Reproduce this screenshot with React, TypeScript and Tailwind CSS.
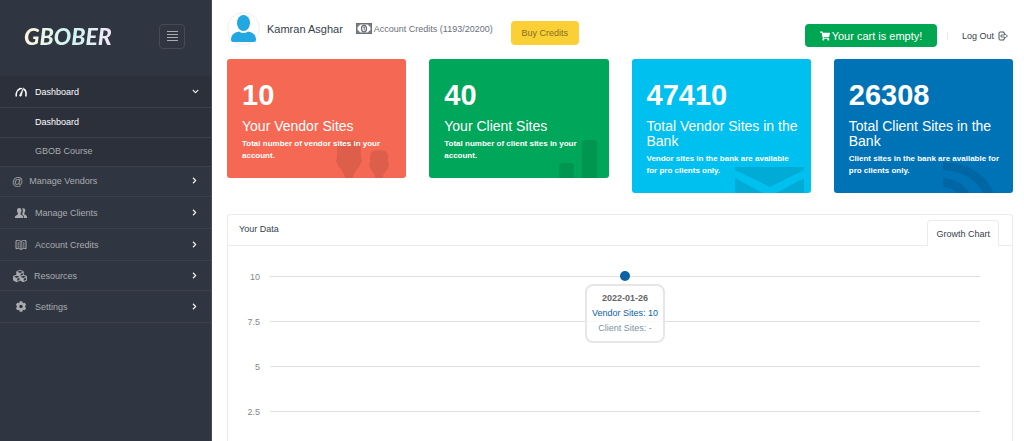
import type { ReactNode } from 'react';
import clsx from 'clsx';
import { FaChevronDown, FaChevronRight, FaCog, FaCubes, FaShoppingCart } from 'react-icons/fa';

type MenuItem = {
    label: string;
    icon: ReactNode;
    className: string;
};

function GaugeIcon() {
    return (
        <svg className="w-3 h-3" viewBox="0 0 24 24" fill="none" stroke="currentColor" aria-hidden="true">
            <path d="M2.5 21c-1-8 3-14 8-15.5" strokeWidth="3" />
            <path d="M17 6c4.500 2 6 8 4.500 15" strokeWidth="3" />
            <path d="M9 5h5" strokeWidth="2.5" />
            <path d="M17 3.500 12.500 20a2 2 0 0 1-3.500-1z" fill="currentColor" strokeWidth="1" />
        </svg>
    );
}

function UsersIcon() {
    return (
        <svg className="w-3 h-3" viewBox="0 0 24 24" fill="currentColor" aria-hidden="true">
            <path d="M8.500 2c3.200 0 4.500 2 4.500 5 0 2.200-.8 4-1.800 5v3c0 1 5.300 1.800 5.300 4.500V22H0v-2.500C0 16.800 5.800 16 5.800 15v-3C4.800 11 4 9.200 4 7c0-3 1.300-5 4.500-5z" />
            <path d="M14.500 3c3.500-1 6 .8 6 4.200 0 2-.8 3.600-1.700 4.500v3c0 1 5.200 2 5.200 4.600V22h-6v-2.500c0-2-1.500-3.300-3.500-4.200v-3c1.600-2.300 1.800-6.300 0-9.300z" />
        </svg>
    );
}

function BookIcon() {
    return (
        <svg className="w-3 h-3" viewBox="0 0 24 24" fill="none" stroke="currentColor" strokeWidth="2" aria-hidden="true">
            <path d="M12 5C9 2.500 5 2.500 2 3.500v16c3-1 7-1 10 1.500 3-2.500 7-2.500 10-1.500v-16C19 2.500 15 2.500 12 5zM12 5v16" />
            <path d="M5 8h4M5 12h4M5 16h4M15 8h4M15 12h4M15 16h4" />
        </svg>
    );
}

function MoneyIcon() {
    return (
        <svg className="w-4 h-[11px]" viewBox="0 0 32 22" fill="none" stroke="currentColor" aria-hidden="true">
            <path d="M1.500 1.500h29v19h-29z" strokeWidth="3" />
            <path d="M3 3h5L3 8zM29 3h-5l5 5zM3 19h5l-5-5zM29 19h-5l5-5z" fill="currentColor" />
            <ellipse cx="16" cy="11" rx="5" ry="6.5" strokeWidth="2.5" />
            <path d="M14.500 9 16.500 7.500v7" strokeWidth="2" />
        </svg>
    );
}

function LogoutIcon() {
    return (
        <svg className="w-[10px] h-[10px]" viewBox="0 0 20 20" fill="none" stroke="currentColor" strokeWidth="1.8" aria-hidden="true">
            <path d="M12 5V2H4Q2 2 2 4v12q0 2 2 2h8v-3" />
            <path d="M6 8h7V5l6 5-6 5v-3H6z" strokeWidth="1.5" />
        </svg>
    );
}

const MENU: MenuItem[] = [
    { label: 'Manage Vendors', icon: <span className="text-[11px] leading-3">@</span>, className: 'h-[30px] pb-[2px] pl-3 gap-[6px]' },
    { label: 'Manage Clients', icon: <UsersIcon />, className: 'h-8 pl-[15px] gap-2' },
    { label: 'Account Credits', icon: <BookIcon />, className: 'h-8 pl-[15px] gap-2' },
    { label: 'Resources', icon: <FaCubes className="w-[14px] h-[14px]" />, className: 'h-[30px] pl-[13px] gap-[7px]' },
    { label: 'Settings', icon: <FaCog className="w-3 h-[11px]" />, className: 'h-8 pl-[15px] gap-2' },
];

const CARDS = [
    {
        value: '10',
        title: 'Your Vendor Sites',
        text: 'Total number of vendor sites in your account.',
        color: 'bg-[#f56954]',
        art: (
            <>
                <path d="M8 5q0-5 12-5t12 5v12l1 4-3 6q-5 5-6 11H16q-1-6-6-11l-3-6 1-4z" />
                <path d="M41 16q0-6 9-6t9 6v6l1 3-2 5q-4 3-4 8h-8q0-5-4-8l-2-5 1-3z" />
            </>
        ),
    },
    {
        value: '40',
        title: 'Your Client Sites',
        text: 'Total number of client sites in your account.',
        color: 'bg-[#00a65a]',
        art: (
            <>
                <path d="M27 38V26q0-3 3-3h9q3 0 3 3v12z" />
                <path d="M50 38V3q0-3 3-3h9q3 0 3 3v35z" />
            </>
        ),
    },
    {
        value: '47410',
        title: 'Total Vendor Sites in the Bank',
        text: 'Vendor sites in the bank are available for pro clients only.',
        color: 'bg-[#00c0ef]',
        art: (
            <>
                <path d="M1 12h69v3L36 32 1 15z" />
                <path d="M1 23v15h28zM70 23v15H42z" />
            </>
        ),
    },
    {
        value: '26308',
        title: 'Total Client Sites in the Bank',
        text: 'Client sites in the bank are available for pro clients only.',
        color: 'bg-[#0073b7]',
        art: (
            <>
                <path d="M7 7q37 1 51 31H47Q36 17 7 15z" />
                <path d="M7 23q18 1 27 15H21q-6-5-14-6z" />
            </>
        ),
    },
];

const TICKS = ['10', '7.5', '5', '2.5'];

function Sidebar() {
    return (
        <aside className="w-[212px] shrink-0 bg-[#303641] text-[#aaabae] border-r border-[#454a54]">
            <div className="h-[76px] flex items-center justify-between pb-1 pl-6 pr-[26px]">
                <a
                    href="#"
                    className="pr-1 font-['Lato',sans-serif] text-[23px] leading-6 font-black italic text-transparent bg-clip-text bg-gradient-to-r from-[#fff6dc] via-[#cdf5f2] to-[#f4e4f5]"
                >
                    GBOBER
                </a>
                <button type="button" aria-label="Toggle menu" className="w-[26px] h-[25px] flex flex-col items-center justify-center gap-[2px] rounded-sm border border-[#454a54]">
                    <span className="w-[11px] h-px bg-[#aaabae]" />
                    <span className="w-[11px] h-px bg-[#aaabae]" />
                    <span className="w-[11px] h-px bg-[#aaabae]" />
                    <span className="w-[11px] h-px bg-[#aaabae]" />
                </button>
            </div>

            <nav>
                <div className="bg-[#2b303a]">
                    <a href="#" className="h-8 flex items-center gap-2 pl-[15px] pr-3 border-b border-[#3b404b] text-white">
                        <GaugeIcon />
                        <span className="flex-1">Dashboard</span>
                        <FaChevronDown className="w-[7px] h-[7px]" />
                    </a>
                    <a href="#" className="h-[30px] flex items-center pb-[2px] pl-[35px] border-b border-[#3b404b] text-white">Dashboard</a>
                    <a href="#" className="h-[29px] flex items-center pb-[2px] pl-[35px] border-b border-[#3b404b]">GBOB Course</a>
                </div>
                {MENU.map((item) => (
                    <a key={item.label} href="#" className={clsx('flex items-center pr-[13px] border-b border-[#3b404b]', item.className)}>
                        {item.icon}
                        <span className="flex-1">{item.label}</span>
                        <FaChevronRight className="w-[7px] h-[7px] text-white" />
                    </a>
                ))}
            </nav>
        </aside>
    );
}

function Header() {
    return (
        <header className="h-[59px] flex items-start justify-between">
            <div className="flex items-center pt-3">
                <div className="w-[33px] h-[33px] rounded-full border border-[#eeeeee] flex items-center justify-center">
                    <svg className="w-[25px] h-[27px] text-[#22a7e0]" viewBox="0 0 25 27" fill="currentColor" aria-hidden="true">
                        <ellipse cx="12.5" cy="8" rx="6.5" ry="8" />
                        <path d="M0 24q0-6 8-7.500 4.500 3 9 0 8 1.500 8 7.500v1q0 2-2 2H2q-2 0-2-2z" />
                    </svg>
                </div>
                <span className="ml-[7px] text-[11px] text-[#373e4a]">Kamran Asghar</span>
                <span className="ml-[13px] flex items-center gap-[2px] text-[#6b7078]">
                    <MoneyIcon />
                    Account Credits (1193/20200)
                </span>
                <button type="button" className="ml-[18px] mt-2 h-6 w-[68px] rounded-sm bg-[#fad036] text-[#846e20]">Buy Credits</button>
            </div>
            <div className="flex items-center pt-6 pr-[5px]">
                <button type="button" className="h-[23px] w-[132px] flex items-center justify-center gap-[2px] rounded-sm bg-[#00a651] text-[11px] text-white">
                    <FaShoppingCart className="w-[10px] h-[10px]" />
                    Your cart is empty!
                </button>
                <span className="ml-[10px] mr-[14px] w-px h-2 bg-[#ebebeb]" />
                <a href="#" className="flex items-center gap-1 text-[#373e4a]">
                    Log Out
                    <LogoutIcon />
                </a>
            </div>
        </header>
    );
}

function Chart() {
    return (
        <section className="mt-[21px] flex-1 border border-b-0 border-[#ebebeb] rounded-t-sm">
            <div className="h-[31px] flex justify-between pl-[11px] pr-[13px] border-b border-[#ebebeb] text-[#373e4a]">
                <h2 className="pt-2">Your Data</h2>
                <button type="button" className="mt-[5px] -mb-px px-2 rounded-t-sm border border-b-0 border-[#ebebeb] bg-white">Growth Chart</button>
            </div>
            <div className="relative pt-2 pr-8">
                {TICKS.map((tick) => (
                    <div key={tick} className="h-[45px] flex items-center text-[#888888]">
                        <span className="w-8 text-right">{tick}</span>
                        <span className="ml-[10px] flex-1 h-px bg-[#dfdfdf]" />
                    </div>
                ))}
                {/* Hovered point and its tooltip */}
                <div className="absolute top-[25px] left-[42px] right-8 flex flex-col items-center">
                    <span className="w-[10px] h-[10px] rounded-full bg-[#0b62a4]" />
                    <div className="mt-[3px] w-[80px] py-[5px] rounded-lg border-2 border-[#e6e6e6] bg-white/80 text-center leading-[15px]">
                        <div className="font-bold text-[#666666]">2022-01-26</div>
                        <div className="text-[#0b62a4]">Vendor Sites: 10</div>
                        <div className="text-[#7a92a3]">Client Sites: -</div>
                    </div>
                </div>
            </div>
        </section>
    );
}

export default function App() {
    return (
        <div className="min-h-screen flex bg-white font-['Liberation_Sans',Arial,sans-serif] text-[9px] leading-3">
            <Sidebar />
            <main className="flex-1 min-w-0 flex flex-col pl-[15px] pr-[11px]">
                <Header />
                <div className="grid grid-cols-4 gap-[23px] items-start">
                    {CARDS.map((card) => (
                        <article key={card.value} className={clsx('relative overflow-hidden rounded-[3px] pl-[15px] pr-[11px] pt-5 pb-4 text-white', card.color)}>
                            <svg className="absolute right-0 bottom-0 w-[77px] h-[38px] text-black/10" viewBox="0 0 77 38" fill="currentColor" aria-hidden="true">
                                {card.art}
                            </svg>
                            <div className="relative">
                                <div className="text-[29px] leading-8 font-bold">{card.value}</div>
                                <h3 className="mt-2 text-[14px] leading-[15px]">{card.title}</h3>
                                <p className="mt-1 text-[8px] font-bold">{card.text}</p>
                            </div>
                        </article>
                    ))}
                </div>
                <Chart />
            </main>
        </div>
    );
}
